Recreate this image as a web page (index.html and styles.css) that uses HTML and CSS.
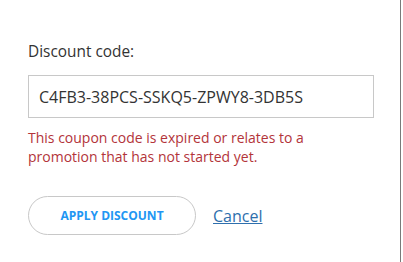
FILE: index.html
```html
<!DOCTYPE html>
<html>
<head>
<meta charset="utf-8">
<link rel="stylesheet" href="styles.css">
</head>
<body>
<div class="panel">
  <form class="discount">
    <label class="label" for="code">Discount code:</label>
    <input class="code-input" id="code" type="text" value="C4FB3-38PCS-SSKQ5-ZPWY8-3DB5S">
    <p class="error">This coupon code is expired or relates to a promotion that has not started yet.</p>
    <div class="actions">
      <button type="button" class="apply">APPLY DISCOUNT</button>
      <a href="#" class="cancel">Cancel</a>
    </div>
  </form>
</div>
</body>
</html>
```
FILE: styles.css
```css
html, body {
  margin: 0;
  padding: 0;
  background: #fff;
}
body {
  font-family: "Open Sans", "Noto Sans", sans-serif;
  color: #333;
}
.panel {
  width: 401px;
  height: 262px;
  border-right: 1px solid #7a7a7a;
  box-sizing: border-box;
}
.discount {
  display: flex;
  flex-direction: column;
  padding: 41px 28px 0 28px;
  width: 346px;
}
.label {
  font-size: 15.4px;
  line-height: 22px;
  color: #333;
}
.code-input {
  margin-top: 12px;
  height: 43px;
  box-sizing: border-box;
  border: 1px solid #c8c8c8;
  padding: 0 10px;
  font-family: inherit;
  font-size: 16px;
  color: #333;
  outline: none;
}
.error {
  margin: 10px 0 0 0;
  font-size: 14px;
  line-height: 19px;
  color: #b3343a;
  width: 290px;
}
.actions {
  display: flex;
  align-items: center;
  gap: 17px;
  margin-top: 30px;
}
.apply {
  width: 168px;
  height: 39px;
  border: 1px solid #c8c8c8;
  border-radius: 20px;
  background: #fff;
  font-family: inherit;
  font-weight: 700;
  font-size: 12px;
  color: #2196f3;
  padding: 0;
}
.cancel {
  font-size: 16px;
  color: #2e6fad;
  text-decoration: underline;
}
```
